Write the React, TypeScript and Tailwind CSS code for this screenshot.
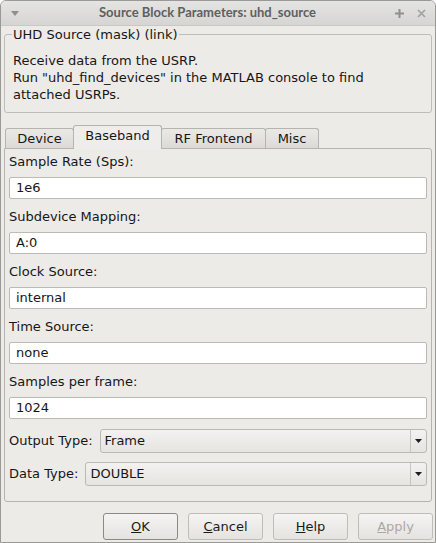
import React from "react";

const body = { fontFamily: '"DejaVu Sans", sans-serif' };
const titleFont = { fontFamily: 'Lato, "DejaVu Sans", sans-serif' };

const fields = [
  { label: "Sample Rate (Sps):", value: "1e6" },
  { label: "Subdevice Mapping:", value: "A:0" },
  { label: "Clock Source:", value: "internal" },
  { label: "Time Source:", value: "none" },
  { label: "Samples per frame:", value: "1024" },
];

const tabs = [
  { name: "Device", w: "w-[69px]" },
  { name: "Baseband", w: "w-[89px]" },
  { name: "RF Frontend", w: "w-[105px]" },
  { name: "Misc", w: "w-[54px]" },
];

function Combo({ label, value }: { label: string; value: string }) {
  return (
    <div className="flex items-center h-[24px] mb-[9px]">
      <span className="pr-[7px] leading-[16px]">{label}</span>
      <div className="flex-1 flex h-[24px] rounded-[3px] border border-[#bcb9b4] bg-gradient-to-b from-[#f3f2f0] to-[#e6e4e1]">
        <span className="flex-1 flex items-center pl-[4px]">{value}</span>
        <span className="w-[16px] border-l border-[#c8c5c0] flex items-center justify-center">
          <svg width="7" height="4" viewBox="0 0 7 4">
            <path d="M0 0h7L3.5 4z" fill="#1e1e1e" />
          </svg>
        </span>
      </div>
    </div>
  );
}

function Button({ children, primary, disabled }: { children: React.ReactNode; primary?: boolean; disabled?: boolean }) {
  return (
    <div
      className={`w-[75px] h-[27px] flex items-center justify-center rounded-[3px] border bg-gradient-to-b from-[#f5f4f3] to-[#e5e3e0] ${
        primary ? "border-[#8c8985]" : "border-[#c0bdb8]"
      } ${disabled ? "text-[#aaa8a5]" : "text-[#1a1a1a]"}`}
    >
      {children}
    </div>
  );
}

export default function App() {
  return (
    <div
      className="w-[436px] h-[543px] bg-[#edebe8] border border-[#9b9996] rounded-t-[6px] flex flex-col text-[13px] text-[#161616] overflow-hidden"
      style={body}
    >
      {/* title bar */}
      <div className="h-[25px] flex items-center bg-gradient-to-b from-[#e4e4e3] to-[#d6d5d4] border-b border-[#cac8c5] shrink-0">
        <svg className="ml-[10px]" width="8" height="5" viewBox="0 0 8 5">
          <path d="M0 0h8L4 5z" fill="#8e8e8e" />
        </svg>
        <div className="flex-1 text-center font-bold text-[#5f5f5f] text-[13px] ml-[1px]" style={titleFont}>
          Source Block Parameters: uhd_source
        </div>
        <svg className="mr-[13px]" width="9" height="9" viewBox="0 0 9 9">
          <path d="M4.5 0v9M0 4.5h9" stroke="#8f8f8f" strokeWidth="2" />
        </svg>
        <svg className="mr-[9px]" width="9" height="9" viewBox="0 0 9 9">
          <path d="M1 1l7 7M8 1l-7 7" stroke="#a0a0a0" strokeWidth="1.6" />
        </svg>
      </div>

      {/* mask group box */}
      <div className="relative mx-[3px] mt-[8px] h-[79px] border border-[#c0bdb8] rounded-[3px] shrink-0">
        <span className="absolute left-[7px] top-[-9px] bg-[#edebe8] px-[1px] leading-[17px]">UHD Source (mask) (link)</span>
        <div className="pt-[17px] pl-[8px] leading-[17px]">
          Receive data from the USRP.
          <br />
          Run "uhd_find_devices" in the MATLAB console to find
          <br />
          attached USRPs.
        </div>
      </div>

      {/* tabs */}
      <div className="flex items-end ml-[4px] mt-[12px] h-[23px] relative z-10 shrink-0">
        {tabs.map((t, i) => {
          const sel = t.name === "Baseband";
          return (
            <div
              key={t.name}
              className={`${t.w} ${i > 0 ? "ml-[-1px]" : ""} border border-[#b7b4af] rounded-t-[3px] flex items-center justify-center ${
                sel
                  ? "h-[24px] mb-[-1px] bg-[#efedeb] border-b-0 relative z-10 pb-[3px]"
                  : "h-[20px] border-b-0 bg-gradient-to-b from-[#ebe9e6] to-[#dddad6] pt-[1px]"
              }`}
            >
              {t.name}
            </div>
          );
        })}
      </div>

      {/* tab pane */}
      <div className="mx-[3px] h-[354px] border border-[#b7b4af] rounded-b-[3px] rounded-tr-[3px] px-[4px] pt-[5px] shrink-0">
        {fields.map((f) => (
          <div key={f.label}>
            <div className="leading-[16px]">{f.label}</div>
            <div className="mt-[7px] mb-[10px] h-[22px] bg-white border border-[#bdbab5] rounded-[2px] flex items-center pl-[6px]">
              {f.value}
            </div>
          </div>
        ))}
        <Combo label="Output Type:" value="Frame" />
        <Combo label="Data Type:" value="DOUBLE" />
      </div>

      {/* buttons */}
      <div className="flex justify-end gap-[10px] mt-[11px] pr-[2px] shrink-0">
        <Button primary>
          <span>
            <u>O</u>K
          </span>
        </Button>
        <Button>
          <span>
            <u>C</u>ancel
          </span>
        </Button>
        <Button>
          <span>
            <u>H</u>elp
          </span>
        </Button>
        <Button disabled>
          <span>
            <u>A</u>pply
          </span>
        </Button>
      </div>
    </div>
  );
}
